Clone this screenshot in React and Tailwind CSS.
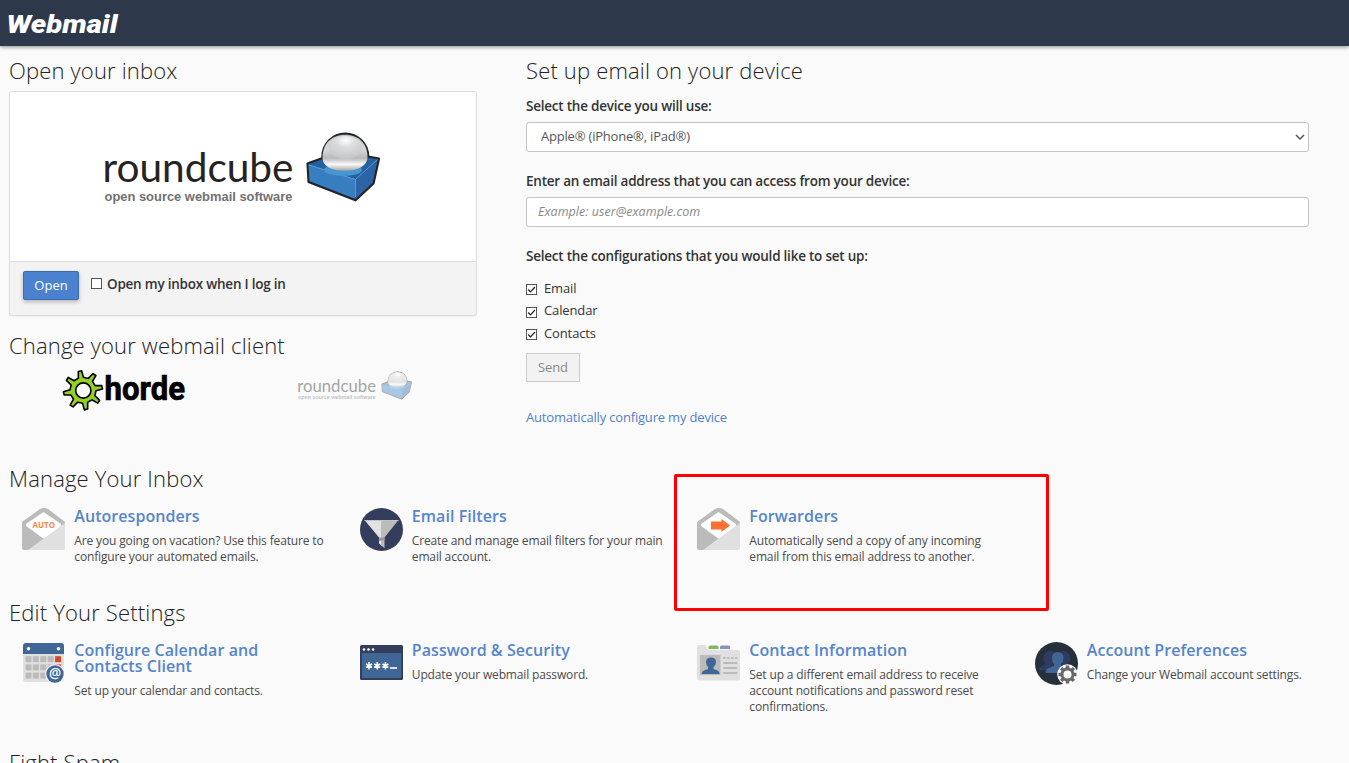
import React from "react";

const heading = "h-[30px] text-[22px] leading-[28px] font-light tracking-[0.17px] text-[#222] whitespace-nowrap";
const label = "text-[13.5px] leading-5 font-semibold tracking-[-0.23px]";

function RoundcubeLogo({ className }) {
  return (
    <svg className={className} viewBox="0 0 300 100" aria-label="roundcube">
      <defs>
        <linearGradient id="ball" x1="0" y1="0" x2="0" y2="1">
          <stop offset="0" stopColor="#c4c4c4" />
          <stop offset="0.4" stopColor="#d8d8d8" />
          <stop offset="0.65" stopColor="#b9b9b9" />
          <stop offset="0.82" stopColor="#fafafa" />
          <stop offset="1" stopColor="#a4a4a4" />
        </linearGradient>
        <radialGradient id="shine" cx="0.52" cy="0.2" r="0.8">
          <stop offset="0" stopColor="#fff" />
          <stop offset="0.35" stopColor="#dcdddf" />
          <stop offset="1" stopColor="#c3c5c7" />
        </radialGradient>
      </defs>
      <text x="12.5" y="61.800" textLength="191" lengthAdjust="spacingAndGlyphs" fontFamily="Lato, sans-serif" fontSize="41" fill="#252323">roundcube</text>
      <text x="14.5" y="80.500" textLength="188" lengthAdjust="spacingAndGlyphs" fontFamily="Liberation Sans, Arial, sans-serif" fontWeight="bold" fontSize="13" fill="#717171">open source webmail software</text>
      <circle cx="255.300" cy="36.500" r="24" fill="#242327" />
      <path d="M217.500 43.500L234 37.500L278 36.500L289 38.500L283.500 63.500L265.500 80.300L218.500 62Z" fill="#2560a0" stroke="#242327" strokeWidth="2.200" strokeLinejoin="round" />
      <path d="M218.500 44.500L265.500 59.500L264.500 78.500L219.700 61Z" fill="#367ebf" />
      <path d="M266.500 59.500L287.500 40L282.500 62.500L266 78.300Z" fill="#2b63a4" />
      <path d="M219 45L265.500 59.500L287.500 39.500M265.500 59.500V77" fill="none" stroke="#67a9df" strokeWidth="0.800" />
      <ellipse cx="253" cy="50" rx="19" ry="6" fill="#4596d2" />
      <path d="M232.500 38C232.500 24 241 14.800 255 14.800C269 14.800 277.500 24 277.500 37C277.500 46 268 50.800 255 50.800C241 50.800 232.500 46 232.500 38Z" fill="url(#ball)" />
      <ellipse cx="255.300" cy="27.500" rx="16.500" ry="11.500" fill="url(#shine)" />
    </svg>
  );
}

function gearPath(cx, cy) {
  const points = [];
  const at = (deg, r) => {
    const a = (deg * Math.PI) / 180;
    points.push(`${(cx + r * Math.cos(a)).toFixed(2)} ${(cy + r * Math.sin(a)).toFixed(2)}`);
  };
  for (let i = 0; i < 8; i++) {
    const t = -98 + i * 45;
    at(t - 13, 13);
    at(t - 6, 19.3);
    at(t + 4, 19.6);
    at(t + 10, 13);
  }
  return `M${points.join("L")}Z`;
}

function HordeLogo() {
  return (
    <svg className="h-[46px] w-[130px]" viewBox="0 0 130 46" aria-label="horde">
      <path d={gearPath(22, 23.3)} fill="#94cf25" stroke="#000" strokeWidth="1.600" strokeLinejoin="round" />
      <circle cx="22.300" cy="23.500" r="7.600" fill="#fafafa" stroke="#000" strokeWidth="1.600" />
      <text x="43.500" y="32.700" textLength="80.500" lengthAdjust="spacingAndGlyphs" fontFamily="Roboto, sans-serif" fontWeight="700" fontSize="33.500" fill="#000" stroke="#000" strokeWidth="0.700">horde</text>
    </svg>
  );
}

function EnvelopeIcon({ auto }) {
  return (
    <svg className="h-11 w-11" viewBox="0 0 44 44">
      <path d="M0 14L18 1Q22-1 26 1L43 14V19H0Z" fill="#bbb" />
      <path d="M4 16L21.500 4L39 16L39 20L21 36L4 20Z" fill="#fff" />
      <path d="M0 15L22 31L7 42H2Q0 42 0 40Z" fill="#bbb" />
      <path d="M43 15V40Q43 42 41 42H6Z" fill="#e0e0e0" />
      {auto ? (
        <text x="10.500" y="20" textLength="22.500" lengthAdjust="spacingAndGlyphs" fontFamily="Open Sans, sans-serif" fontWeight="bold" fontSize="9.500" fill="#f48744">AUTO</text>
      ) : (
        <path d="M14 13.500H24.500V11L33 17.500L24.500 24V21.500H14Z" fill="#fa7132" />
      )}
    </svg>
  );
}

function FilterIcon() {
  return (
    <svg className="h-11 w-11" viewBox="0 0 44 44">
      <circle cx="21.500" cy="21.500" r="21.500" fill="#343e5c" />
      <path d="M4.500 12H22V38L19 35.500V29.500Z" fill="#e2e2e2" />
      <path d="M21 12H38.500L24.500 29.500V40L21 37.500Z" fill="#bbb" />
      <path d="M19 29.500H24.500V32L19 33Z" fill="#999" />
      <path d="M4.500 12H38.500V13H4.500Z" fill="#c5c5c5" />
    </svg>
  );
}

function CalendarIcon() {
  const cells = [];
  for (let r = 0; r < 3; r++) {
    for (let c = 0; c < 5; c++) {
      cells.push(<rect key={`${r}-${c}`} x={3.500 + c * 7.400} y={14.200 + r * 8.200} width="6" height="6" fill={c === 4 && r < 2 ? "#d3492c" : "#bbb"} />);
    }
  }
  return (
    <svg className="h-11 w-11" viewBox="0 0 44 44">
      <rect x="1" y="1" width="41" height="39" rx="3" fill="#e0e0e0" />
      <path d="M1 12V4Q1 1 4 1H39Q42 1 42 4V12Z" fill="#3f6694" />
      <circle cx="6.500" cy="6.800" r="1.800" fill="#fff" />
      <circle cx="36.500" cy="6.800" r="1.800" fill="#fff" />
      {cells}
      <circle cx="33" cy="32" r="9.800" fill="#fafafa" />
      <circle cx="33" cy="32" r="8.700" fill="#3f6694" />
      <text x="33" y="36" textAnchor="middle" fontFamily="Open Sans, sans-serif" fontWeight="600" fontSize="13.500" fill="#fff">@</text>
    </svg>
  );
}

function PasswordIcon() {
  return (
    <svg className="h-11 w-11" viewBox="0 0 44 44">
      <rect x="0" y="3" width="43" height="35" rx="1.500" fill="#343e5c" />
      <rect x="2" y="11" width="39.300" height="25" rx="1" fill="#3f6694" />
      <circle cx="4" cy="7.500" r="1.300" fill="#fff" />
      <circle cx="8.500" cy="7.500" r="1.300" fill="#fff" />
      <circle cx="13" cy="7.500" r="1.300" fill="#fff" />
      <path d="M9 20V27.500M6 22L12 25.500M12 22L6 25.500M17.200 20V27.500M14.200 22L20.200 25.500M20.200 22L14.200 25.500M25.400 20V27.500M22.400 22L28.400 25.500M28.400 22L22.400 25.500" stroke="#fff" strokeWidth="1.500" />
      <rect x="30" y="25.200" width="7" height="1.600" fill="#fff" />
    </svg>
  );
}

function ContactIcon() {
  return (
    <svg className="h-11 w-11" viewBox="0 0 44 44">
      <path d="M0 5Q0 3 2 3H9Q10 8 12 8H41Q43 8 43 10V36.500Q43 38.500 41 38.500H2Q0 38.500 0 36.500Z" fill="#e0e0e0" />
      <path d="M11.500 7V5Q11.500 3.500 13 3.500H20Q21.500 3.500 21.500 5V7Z" fill="#83b958" />
      <path d="M23 7V5Q23 3.500 24.500 3.500H31.500Q33 3.500 33 5V7Z" fill="#8c8fc5" />
      <rect x="3" y="13" width="20.500" height="20" fill="#bbb" />
      <path d="M4.500 32Q4.500 28.500 11 27L11 25Q9 23 9 20Q9 15.500 14 15.500Q19 15.500 19 20Q19 23 16.500 25V27Q23 28.500 22.500 32Z" fill="#3f6694" />
      <path d="M26 16H28.500M30 16H32.500M34 16H36.500M38 16H40.500" stroke="#bbb" strokeWidth="2" />
      <path d="M27 21H39.500M27 26H39.500M27 31H39.500" stroke="#bbb" strokeWidth="2" strokeLinecap="round" />
    </svg>
  );
}

function PreferencesIcon() {
  const teeth = [0, 45, 90, 135, 180, 225, 270, 315];
  return (
    <svg className="h-11 w-11" viewBox="0 0 44 44">
      <circle cx="21.500" cy="21.500" r="21.500" fill="#25303b" />
      <path d="M4 27Q5 24 9 23L10.500 21Q7.500 18 8.500 14Q10 9 15 9Q19 9 20 12L18 28H4ZM39 27Q38 24 33 22Q36 18 35 14Q33 9 28.500 9Q25 9 23 12L26 28Z" fill="#2f3b60" />
      <path d="M10.500 31Q10 27 15 25.500L19 24V22Q17 20 17 16Q17 10 22.500 10Q28.500 10 28.500 16Q28.500 20 26 22V24Q31 26 32 31Z" fill="#3f6694" />
      <circle cx="32.500" cy="32.500" r="10.300" fill="#fafafa" />
      <g fill="#686868">
        {teeth.map((a) => <rect key={a} x="30.800" y="23.500" width="3.400" height="4" transform={`rotate(${a} 32.500 32.500)`} />)}
        <circle cx="32.500" cy="32.500" r="7" />
      </g>
      <circle cx="32.500" cy="32.500" r="4" fill="#fafafa" />
    </svg>
  );
}

function Item({ icon, title, children }) {
  return (
    <div className="flex w-[337.5px] shrink-0 pl-[22px]">
      <div className="w-[52.3px] shrink-0">{icon}</div>
      <div className="whitespace-nowrap">
        <h3 className="text-[16px] leading-4 font-semibold tracking-[0.06px] text-[#5685ca]">{title}</h3>
        <p className="mt-[9px] text-[12px] leading-4 tracking-[-0.145px] text-[#4a4a4a]">{children}</p>
      </div>
    </div>
  );
}

function Check({ checked }) {
  return (
    <svg className="h-[11px] w-[11px] shrink-0" viewBox="0 0 11 11">
      <rect x="0.500" y="0.500" width="10" height="10" fill="#fff" stroke="#555" />
      {checked && <path d="M2.200 5.500L4.400 7.800L9 3" fill="none" stroke="#222" strokeWidth="1.200" />}
    </svg>
  );
}

export default function App() {
  return (
    <div className="relative h-[763px] w-[1349px] overflow-hidden bg-[#fafafa] font-['Open_Sans',sans-serif] text-[13px] text-[#333]">
      <header className="h-[46px] bg-[#2d394a] pt-[10px] pl-2 shadow-[0_1px_4px_rgba(0,0,0,0.45)]">
        <svg className="h-7 w-[112px]" viewBox="0 0 112 28" aria-label="Webmail">
          <text x="-1.500" y="23" textLength="111" lengthAdjust="spacingAndGlyphs" fontFamily="Roboto, sans-serif" fontStyle="italic" fontWeight="900" fontSize="25" fill="#fff">Webmail</text>
        </svg>
      </header>

      <div className="flex h-[418px] pt-[10px] pl-[9px]">
        <section className="w-[468px]">
          <h2 className={heading}>Open your inbox</h2>
          <div className="mt-[5px] h-[225px] overflow-hidden rounded-[3px] border border-[#dcdcdc] bg-[#f3f3f3] shadow-[0_1px_1px_rgba(0,0,0,0.05)]">
            <div className="h-[170px] border-b border-[#dcdcdc] bg-white pt-[28px] pl-[80px]">
              <RoundcubeLogo className="h-[100px] w-[300px]" />
            </div>
            <div className="flex pt-[9px] pl-[13px]">
              <button className="h-[29px] w-[56px] rounded-[2px] border border-[#3a6bb3] bg-[#4a82cf] text-[13px] leading-[27px] text-white shadow-[0_2px_4px_rgba(0,0,0,0.25)]">Open</button>
              <label className={`${label} ml-3 flex h-[25px] items-center gap-[5px] whitespace-nowrap`}>
                <Check />
                <span className="pt-px">Open my inbox when I log in</span>
              </label>
            </div>
          </div>
          <h2 className={`${heading} mt-[15px]`}>Change your webmail client</h2>
          <div className="flex pt-[6px] pl-[52px]">
            <HordeLogo />
            <div className="-mt-px pl-[101px] opacity-40">
              <RoundcubeLogo className="h-[41.33px] w-[124px]" />
            </div>
          </div>
        </section>

        <section className="ml-[49px] w-[783px]">
          <h2 className={heading}>Set up email on your device</h2>
          <p className={`${label} mt-[10px]`}>Select the device you will use:</p>
          <div className="mt-[6px] flex h-[30px] items-center justify-between rounded-[3px] border border-[#c4c4c4] bg-white pr-[3px] pl-[14px] tracking-[-0.2px] text-[#555]">
            <span className="pb-px">Apple® (iPhone®, iPad®)</span>
            <svg className="h-[10px] w-[10px]" viewBox="0 0 10 10"><path d="M1 3L5 7L9 3" fill="none" stroke="#555" strokeWidth="1.500" /></svg>
          </div>
          <p className={`${label} mt-[19px]`}>Enter an email address that you can access from your device:</p>
          <div className="mt-[6px] h-[30px] rounded-[3px] border border-[#c4c4c4] bg-white pl-[11px] text-[12.5px] leading-[27px] tracking-[0.04px] text-[#888] italic">Example: user@example.com</div>
          <p className={`${label} mt-[19px]`}>Select the configurations that you would like to set up:</p>
          <div className="mt-[11px] flex flex-col">
            {["Email", "Calendar", "Contacts"].map((t) => (
              <label key={t} className="flex h-[22.5px] items-center gap-[7px] tracking-[-0.12px]">
                <span className="pt-[2.5px]"><Check checked /></span>
                <span>{t}</span>
              </label>
            ))}
          </div>
          <button className="mt-[8px] block h-[29px] w-[54px] border border-[#ccc] bg-[#f2f2f2] text-[13px] leading-[27px] tracking-[-0.1px] text-[#888]">Send</button>
          <p className="mt-[25px] leading-5 tracking-[-0.18px] text-[#5082c9]">Automatically configure my device</p>
        </section>
      </div>

      <section className="h-[134px]">
        <h2 className={`${heading} pl-[9px]`}>Manage Your Inbox</h2>
        <div className="mt-[14px] flex">
          <Item icon={<EnvelopeIcon auto />} title="Autoresponders">Are you going on vacation? Use this feature to<br />configure your automated emails.</Item>
          <Item icon={<FilterIcon />} title="Email Filters">Create and manage email filters for your main<br />email account.</Item>
          <Item icon={<EnvelopeIcon />} title="Forwarders">Automatically send a copy of any incoming<br />email from this email address to another.</Item>
        </div>
      </section>

      <section className="h-[150px]">
        <h2 className={`${heading} pl-[9px]`}>Edit Your Settings</h2>
        <div className="mt-[14px] flex">
          <Item icon={<CalendarIcon />} title={<>Configure Calendar and<br />Contacts Client</>}>Set up your calendar and contacts.</Item>
          <Item icon={<PasswordIcon />} title="Password & Security">Update your webmail password.</Item>
          <Item icon={<ContactIcon />} title="Contact Information">Set up a different email address to receive<br />account notifications and password reset<br />confirmations.</Item>
          <Item icon={<PreferencesIcon />} title="Account Preferences">Change your Webmail account settings.</Item>
        </div>
      </section>

      <h2 className={`${heading} pl-[9px]`}>Fight Spam</h2>

      <div className="absolute top-[474px] left-[674px] h-[137px] w-[375px] rounded-[2px] border-3 border-[#fe0000]" />
    </div>
  );
}
